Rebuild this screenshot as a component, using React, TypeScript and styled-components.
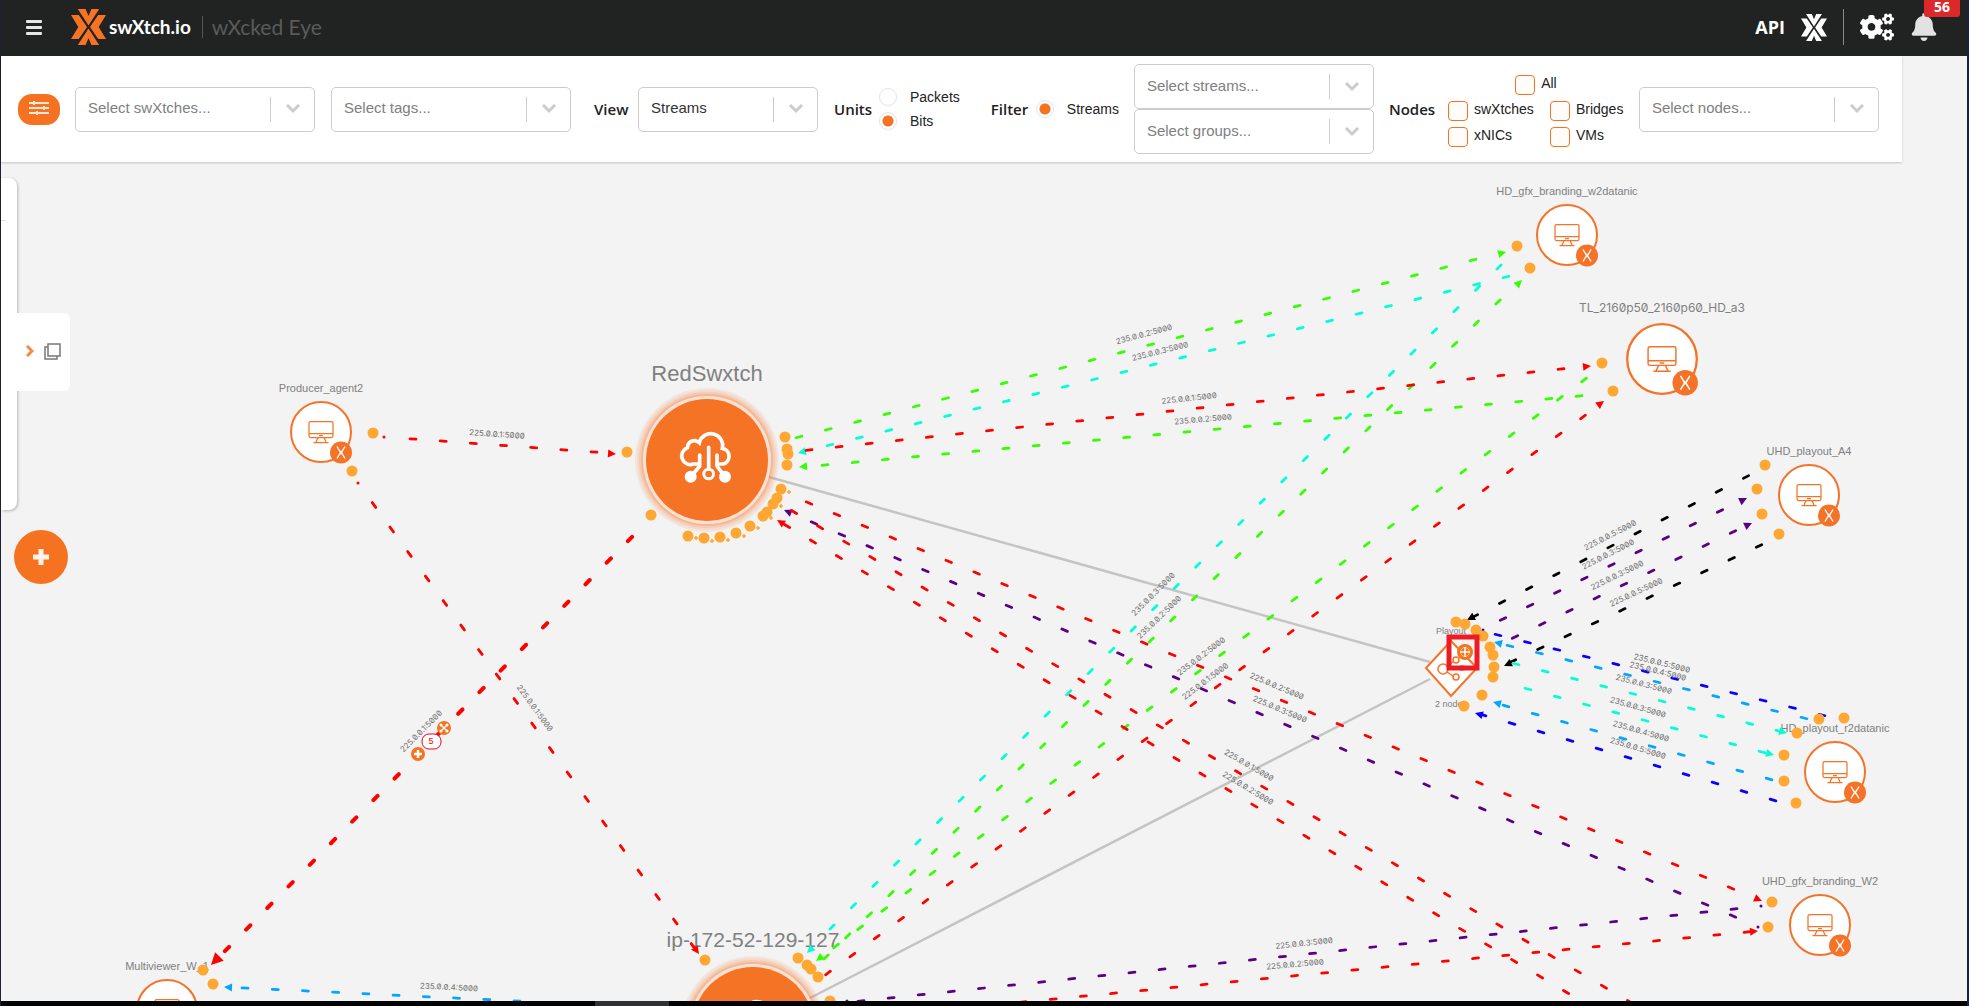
import React from 'react';
import styled, { createGlobalStyle } from 'styled-components';
import { FaBell, FaCogs } from 'react-icons/fa';

const ORANGE = '#f57320';
const AMBER = '#ffa733';
const RED = '#ff0000';
const GREEN = '#33ff00';
const CYAN = '#00ffd5';
const PURPLE = '#5b0080';
const BLACK = '#000000';
const BLUE = '#0a00ff';
const SKY = '#00a6ff';
const SANS = '"Liberation Sans", Arial, sans-serif';

const GlobalStyle = createGlobalStyle`
  * { box-sizing: border-box; }
  body { margin: 0; background: #f3f3f3; font-family: ${SANS}; }
  button, select, input { font-family: inherit; margin: 0; }
`;

const Page = styled.div`
  display: flex;
  flex-direction: column;
  height: 100vh;
  border-left: 1px solid #1d212c;
  border-right: 2px solid #16233f;
`;

/* ---------- header ---------- */

const Header = styled.header`
  display: flex;
  align-items: center;
  justify-content: space-between;
  height: 56px;
  flex: none;
  padding: 0 29px 0 25px;
  background: #212322;
  color: #fff;
`;

const HeaderSide = styled.div<{ $gap: number }>`
  display: flex;
  align-items: center;
  gap: ${(p) => p.$gap}px;
  padding-bottom: 2px;
`;

const MenuButton = styled.button`
  display: grid;
  gap: 3px;
  width: 16px;
  padding: 0;
  border: 0;
  background: none;
`;

const MenuBar = styled.span`
  height: 3px;
  border-radius: 1px;
  background: #e6e6e6;
`;

const Brand = styled.a`
  display: flex;
  align-items: center;
  height: 40px;
  margin-left: 29px;
  color: #fff;
  text-decoration: none;
`;

const BrandName = styled.span`
  margin-left: 3px;
  font: 700 19px/22px Lato, sans-serif;
  white-space: nowrap;
`;

const Product = styled.span`
  margin-left: 11px;
  padding-left: 9px;
  border-left: 1px solid #555;
  color: #5a5b5a;
  font: 400 21px/22px Lato, sans-serif;
  white-space: nowrap;
`;

const ApiLink = styled.a`
  color: #fff;
  font: 700 18px/20px "Open Sans", sans-serif;
  text-decoration: none;
`;

const HeaderRule = styled.span`
  width: 1px;
  height: 36px;
  background: #888;
`;

const IconButton = styled.button<{ $tint: string }>`
  position: relative;
  display: flex;
  padding: 0;
  border: 0;
  background: none;
  color: ${(p) => p.$tint};
`;

const Count = styled.span`
  position: absolute;
  left: 14px;
  bottom: 24px;
  width: 36px;
  height: 24px;
  padding-top: 6px;
  border-radius: 3px;
  background: #dc2828;
  color: #fff;
  font: 700 14px/16px "Open Sans", sans-serif;
  text-align: center;
`;

/* ---------- toolbar ---------- */

const Toolbar = styled.form`
  position: relative;
  display: flex;
  align-items: center;
  height: 106px;
  flex: none;
  margin-right: 65px;
  padding-left: 17px;
  background: #fff;
  box-shadow: 0 1px 2px rgba(0, 0, 0, 0.2);
`;

const Group = styled.div<{ $before?: number }>`
  display: flex;
  align-items: center;
  gap: 8px;
  margin-left: ${(p) => p.$before ?? 15}px;
`;

const FilterButton = styled.button`
  display: grid;
  place-items: center;
  width: 42px;
  height: 31px;
  padding: 0 0 2px;
  border: 0;
  border-radius: 14px;
  background: ${ORANGE};
`;

const Title = styled.span<{ $width: number }>`
  width: ${(p) => p.$width}px;
  color: #222;
  font: 600 15px/20px "Open Sans", sans-serif;
  white-space: nowrap;
`;

const SelectBox = styled.span<{ $width: number }>`
  display: grid;
  grid-template-columns: 1fr 45px;
  align-items: center;
  width: ${(p) => p.$width}px;
  height: 45px;
`;

const Select = styled.select<{ $muted: boolean }>`
  grid-area: 1 / 1 / 2 / 3;
  width: 100%;
  height: 100%;
  padding: 0 46px 3px 12px;
  border: 1px solid #ccc;
  border-radius: 5px;
  background: #fff;
  color: ${(p) => (p.$muted ? '#808080' : '#333')};
  font-size: 15px;
  appearance: none;
`;

const SelectMark = styled.span`
  grid-area: 1 / 2;
  z-index: 1;
  display: grid;
  place-items: center;
  height: 25px;
  border-left: 1px solid #ccc;
  pointer-events: none;
`;

const Stack = styled.div`
  display: flex;
  flex-direction: column;
`;

const RadioRow = styled.label`
  display: flex;
  align-items: center;
  gap: 13px;
  height: 24px;
  color: #222;
  font-size: 14px;
  line-height: 18px;
  white-space: nowrap;
`;

const Radio = styled.input`
  width: 18px;
  height: 18px;
  border: 1px solid #e4e4e4;
  border-radius: 50%;
  background: #fff;
  appearance: none;

  &:checked {
    background: radial-gradient(circle, ${ORANGE} 5px, #fff 6px);
  }
`;

const NodeGrid = styled.div`
  display: grid;
  grid-template-columns: 102px 74px;
  row-gap: 6px;
  margin-left: 6px;
  padding-top: 3px;
`;

const CheckRow = styled.label<{ $wide?: boolean }>`
  display: flex;
  gap: 6px;
  height: 20px;
  grid-column: ${(p) => (p.$wide ? '1 / 3' : 'auto')};
  justify-content: ${(p) => (p.$wide ? 'center' : 'flex-start')};
  color: #222;
  font-size: 14px;
  line-height: 16px;
`;

const Check = styled.input`
  width: 20px;
  height: 20px;
  border: 1px solid ${ORANGE};
  border-radius: 4px;
  background: #fffcfa;
  appearance: none;
`;

/* ---------- canvas ---------- */

const Canvas = styled.main`
  position: relative;
  flex: 1;
  min-height: 0;
  overflow: hidden;
`;

const Graph = styled.svg`
  display: block;
  width: 100%;
  height: 100%;
`;

const NodeName = styled.text<{ $size: number }>`
  fill: #808080;
  font-family: ${SANS};
  font-size: ${(p) => p.$size}px;
  text-anchor: middle;
`;

const SlashedName = styled(NodeName)`
  font-family: Inter, sans-serif;
  font-feature-settings: "zero";
`;

const EdgeName = styled.text`
  fill: #707070;
  font-family: Inter, sans-serif;
  font-size: 8px;
  font-feature-settings: "zero";
  text-anchor: middle;
`;

const EdgeCount = styled.text`
  fill: ${RED};
  font-family: ${SANS};
  font-size: 9px;
  text-anchor: middle;
`;

const Drawer = styled.aside`
  position: absolute;
  top: 16px;
  left: 0;
  display: flex;
  align-items: center;
`;

const DrawerPanel = styled.div`
  width: 16px;
  height: 332px;
  padding-top: 42px;
  border-radius: 0 8px 8px 0;
  background: #fff;
  box-shadow: 1px 1px 3px rgba(0, 0, 0, 0.25);
`;

const DrawerRule = styled.div`
  width: 4px;
  height: 1px;
  background: #ddd;
`;

const DrawerTab = styled.button`
  display: flex;
  align-items: center;
  gap: 10px;
  width: 53px;
  height: 78px;
  margin-top: 16px;
  padding: 0 0 2px 9px;
  border: 0;
  border-radius: 0 6px 6px 0;
  background: #fff;
`;

const AddButton = styled.button`
  position: absolute;
  top: 368px;
  left: 13px;
  display: grid;
  place-items: center;
  width: 54px;
  height: 54px;
  padding: 0;
  border: 0;
  border-radius: 50%;
  background: ${ORANGE};
`;

const ScrollTrack = styled.footer`
  display: flex;
  justify-content: center;
  flex: none;
  height: 5px;
  background: #010204;
`;

const ScrollThumb = styled.span`
  width: 74px;
  margin-right: 704px;
  background: #2f3134;
`;

/* ---------- small parts ---------- */

const XLogo = ({ width, height, fill }: { width: number; height: number; fill: string }) => (
  <svg width={width} height={height} viewBox="0 0 36 36" preserveAspectRatio="none" fill={fill} aria-hidden="true">
    <path d="M7 0h8l3 7 3-7h8L18 16.500z" />
    <path d="M7 36h8l3-7 3 7h8L18 19.500z" />
    <path d="M0 6h8l8.500 12L8 30H0l7.500-12z" />
    <path d="M36 6h-8l-8.500 12L28 30h8l-7.500-12z" />
  </svg>
);

type PickProps = { text: string; width?: number; muted?: boolean };

const Pick = ({ text, width = 240, muted = true }: PickProps) => (
  <SelectBox $width={width}>
    <Select aria-label={text} $muted={muted}>
      <option>{text}</option>
    </Select>
    <SelectMark>
      <svg width="16" height="10" viewBox="0 0 16 10" fill="none" stroke="#ccc" strokeWidth="3" aria-hidden="true">
        <path d="M2 1l6 6 6-6" />
      </svg>
    </SelectMark>
  </SelectBox>
);

const RadioOption = ({ text, name, on }: { text: string; name: string; on?: boolean }) => (
  <RadioRow>
    <Radio type="radio" name={name} defaultChecked={on} />
    {text}
  </RadioRow>
);

const CheckOption = ({ text, wide }: { text: string; wide?: boolean }) => (
  <CheckRow $wide={wide}>
    <Check type="checkbox" />
    {text}
  </CheckRow>
);

/* ---------- graph data ---------- */

type Point = [number, number];
type Edge = { color: string; from: Point; to: Point; tip?: Point; bold?: boolean };

/* from and to are the centres of the first and last dash of a stream. */
const edges: Edge[] = [
  { color: GREEN, from: [799, 437], to: [1473, 260], tip: [1506, 252] },
  { color: CYAN, from: [1506, 277], to: [830, 445], tip: [798, 453] },
  { color: CYAN, from: [1499, 267], to: [832, 927], tip: [807, 953] },
  { color: GREEN, from: [826, 957], to: [1498, 302], tip: [1522, 280] },
  { color: GREEN, from: [1584, 380], to: [836, 946], tip: [816, 961] },
  { color: RED, from: [828, 973], to: [1583, 417], tip: [1604, 401] },
  { color: RED, from: [809, 450], to: [1561, 369], tip: [1591, 366] },
  { color: GREEN, from: [1579, 396], to: [825, 465], tip: [799, 467] },
  { color: RED, from: [809, 503], to: [1731, 888], tip: [1762, 901] },
  { color: PURPLE, from: [1733, 916], to: [814, 523], tip: [784, 510] },
  { color: RED, from: [794, 512], to: [1630, 1002] },
  { color: RED, from: [1566, 992], to: [787, 526], tip: [777, 520] },
  { color: RED, from: [413, 439], to: [594, 452], tip: [616, 454] },
  { color: RED, from: [374, 505], to: [693, 946], tip: [699, 954] },
  { color: RED, from: [630, 539], to: [227, 949], tip: [211, 965], bold: true },
  { color: SKY, from: [517, 1001], to: [245, 988], tip: [224, 987] },
  { color: PURPLE, from: [1734, 909], to: [861, 1001] },
  { color: RED, from: [1023, 1002], to: [1747, 932], tip: [1758, 931] },
  { color: BLACK, from: [1746, 477], to: [1475, 616], tip: [1467, 620] },
  { color: PURPLE, from: [1503, 619], to: [1720, 511], tip: [1747, 498] },
  { color: PURPLE, from: [1515, 637], to: [1733, 532], tip: [1752, 523] },
  { color: BLACK, from: [1759, 546], to: [1513, 661], tip: [1504, 666] },
  { color: BLUE, from: [1498, 635], to: [1822, 715] },
  { color: SKY, from: [1804, 718], to: [1510, 646], tip: [1494, 642] },
  { color: CYAN, from: [1516, 664], to: [1779, 731], tip: [1787, 733] },
  { color: CYAN, from: [1528, 689], to: [1762, 752], tip: [1774, 755] },
  { color: SKY, from: [1769, 779], to: [1506, 706], tip: [1493, 702] },
  { color: BLUE, from: [1773, 800], to: [1483, 715], tip: [1475, 713] },
];

const stubs: { color: string; at: Point }[] = [
  { color: RED, at: [384, 437] },
  { color: RED, at: [358, 483] },
  { color: PURPLE, at: [1758, 927] },
  { color: PURPLE, at: [1761, 906] },
  { color: PURPLE, at: [847, 1001] },
  { color: BLUE, at: [1483, 630] },
];

const ports: Point[] = [
  [627, 452], [785, 437], [787, 449], [788, 454], [787, 465], [781, 489], [777, 498], [773, 504],
  [767, 512], [763, 516], [750, 526], [736, 533], [720, 537], [704, 538], [688, 536], [651, 515],
  [373, 433], [352, 471], [1517, 246], [1530, 268], [1602, 363], [1613, 391], [1765, 465],
  [1757, 489], [1762, 514], [1779, 534], [1456, 622], [1465, 624], [1476, 630], [1483, 636],
  [1490, 647], [1493, 655], [1494, 667], [1493, 677], [1482, 695], [1464, 706], [1819, 719],
  [1844, 718], [1797, 733], [1784, 755], [1784, 781], [1796, 803], [1772, 902], [1768, 927],
  [203, 970], [213, 984], [705, 960], [798, 958], [807, 965], [811, 969], [818, 977], [830, 1001],
];

const sparks: Point[] = [
  [789, 492], [781, 506], [771, 518], [758, 528], [744, 536], [728, 540], [712, 541], [696, 538],
];

const edgeNames: [string, number, number, number][] = [
  ['235.0.0.2:5000', 1144, 334, -15],
  ['235.0.0.3:5000', 1160, 351, -14],
  ['225.0.0.1:5000', 1189, 398, -6],
  ['235.0.0.2:5000', 1203, 419, -5],
  ['225.0.0.1:5000', 497, 434, 4],
  ['225.0.0.1:5000', 535, 708, 54],
  ['225.0.0.1:5000', 421, 731, -45],
  ['235.0.0.4:5000', 449, 987, 3],
  ['235.0.0.3:5000', 1153, 594, -45],
  ['235.0.0.2:5000', 1159, 617, -44],
  ['235.0.0.2:5000', 1201, 656, -37],
  ['225.0.0.1:5000', 1205, 681, -37],
  ['225.0.0.2:5000', 1277, 686, 23],
  ['225.0.0.3:5000', 1280, 709, 23],
  ['225.0.0.1:5000', 1249, 765, 30],
  ['225.0.0.2:5000', 1248, 788, 31],
  ['225.0.0.5:5000', 1610, 535, -27],
  ['225.0.0.3:5000', 1608, 554, -27],
  ['225.0.0.3:5000', 1617, 575, -26],
  ['225.0.0.5:5000', 1636, 592, -25],
  ['235.0.0.5:5000', 1662, 663, 14],
  ['235.0.0.4:5000', 1658, 671, 14],
  ['235.0.0.3:5000', 1644, 684, 15],
  ['235.0.0.3:5000', 1638, 707, 16],
  ['235.0.0.4:5000', 1641, 731, 16],
  ['235.0.0.5:5000', 1638, 748, 17],
  ['225.0.0.3:5000', 1304, 943, -6],
  ['225.0.0.2:5000', 1295, 964, -5],
];

type HostProps = { name: string; x: number; y: number; big?: boolean };

const hosts: HostProps[] = [
  { name: 'HD_gfx_branding_w2datanic', x: 1567, y: 235 },
  { name: 'TL_2160p50_2160p60_HD_a3', x: 1662, y: 359, big: true },
  { name: 'UHD_playout_A4', x: 1809, y: 495 },
  { name: 'HD_playout_r2datanic', x: 1835, y: 772 },
  { name: 'UHD_gfx_branding_W2', x: 1820, y: 925 },
  { name: 'Producer_agent2', x: 321, y: 432 },
  { name: 'Multiviewer_W_1', x: 167, y: 1010 },
];

const PERIOD = 30;
const DASH = 6;

const Arrow = ({ tip, angle, size, color }: { tip: Point; angle: number; size: number; color: string }) => (
  <path
    transform={`translate(${tip[0]} ${tip[1]}) rotate(${angle})`}
    d={`M0 0L${-size} ${-size / 2}V${size / 2}z`}
    fill={color}
  />
);

const Stream = ({ color, from, to, tip, bold }: Edge) => {
  const dx = to[0] - from[0];
  const dy = to[1] - from[1];
  const length = Math.hypot(dx, dy);
  const step = length / Math.round(length / (PERIOD + 0.25));
  const ux = (dx / length) * (DASH / 2);
  const uy = (dy / length) * (DASH / 2);
  return (
    <g>
      <line
        x1={from[0] - ux}
        y1={from[1] - uy}
        x2={to[0] + ux}
        y2={to[1] + uy}
        stroke={color}
        strokeWidth={bold ? 4 : 2.75}
        strokeLinecap="round"
        strokeDasharray={`${DASH} ${step - DASH}`}
      />
      {tip && <Arrow tip={tip} angle={(Math.atan2(dy, dx) * 180) / Math.PI} size={bold ? 12 : 8} color={color} />}
    </g>
  );
};

const Host = ({ x, y, big }: HostProps) => (
  <g transform={`translate(${x} ${y}) scale(${big ? 1.16 : 1})`}>
    <circle r="30" fill="#fff" stroke="#f57329" strokeWidth="2" />
    <g fill="none" stroke="#f57329" strokeWidth="1.250">
      <rect x="-12" y="-10.500" width="24" height="16" rx="1.500" />
      <path d="M-12 1.500h24M-2 3.500h4M-3 5.500l-2 4.500M3 5.500l2 4.500M-7.500 10.500h15" />
    </g>
    <circle cx="20" cy="20.500" r="11" fill="#f57329" />
    <g transform="translate(20 20.500)" fill="none" stroke="#fff" strokeWidth="1.300">
      <path d="M-4 -6L-.5 0L-4 6M4 -6L.5 0L4 6" />
      <path d="M-1.500 -2.500L0 0L1.500 -2.500M-1.500 2.500L0 0L1.500 2.500" strokeWidth=".8" />
    </g>
  </g>
);

const HostName = ({ name, x, y, big }: HostProps) => {
  const Label = big ? SlashedName : NodeName;
  return (
    <Label $size={big ? 12 : 11} x={x} y={y - (big ? 47 : 40)}>
      {name}
    </Label>
  );
};

const Switch = ({ x, y }: { x: number; y: number }) => (
  <g transform={`translate(${x} ${y})`}>
    <circle r="72" fill="#f57325" opacity=".1" />
    <circle r="70" fill="#f57325" opacity=".1" />
    <circle r="68" fill="#f57325" opacity=".14" />
    <circle r="66" fill="#f57325" opacity=".2" />
    <circle r="64" fill="#fee1d2" />
    <circle r="61" fill="#f57325" />
    <g transform="scale(.3333) translate(-381 -361)" fill="none" stroke="#fff" strokeWidth="11" strokeLinecap="round">
      <path d="M357 373H341A26 26 0 0 1 322 324Q325 302 346 303Q354 305 358 309A35 35 0 0 1 427 326A24 24 0 0 1 429 373H412" />
      <path d="M359 346V379L334 410M386 323V388M411 346V379L434 410" />
      <circle cx="386" cy="403" r="14.500" strokeWidth="9" />
      <circle cx="332" cy="411" r="18" fill="#fff" stroke="none" />
      <circle cx="435" cy="411" r="18" fill="#fff" stroke="none" />
    </g>
  </g>
);

const Playout = () => (
  <g>
    <path d="M1451 641l26 27-26 28-25-28z" fill="#fff" stroke="#f57329" strokeWidth="2" />
    <g fill="none" stroke="#f57329" strokeWidth="1.500">
      <circle cx="1443" cy="669" r="5" />
      <circle cx="1456" cy="660" r="3" />
      <circle cx="1456" cy="677" r="3" />
      <ellipse cx="1462" cy="668" rx="3" ry="2" fill="#f57329" />
      <path d="M1447 666l6-4M1447 672l6 4" />
    </g>
  </g>
);

const PlayoutMarker = () => (
  <g>
    <circle cx="1465" cy="652" r="8" fill={ORANGE} />
    <circle cx="1465" cy="652" r="4.500" fill="none" stroke="#ffd27a" />
    <path d="M1460 652h10M1465 647v10" stroke="#fff" strokeWidth="1.500" />
    <rect x="1449" y="637" width="28" height="31" fill="none" stroke="#ed1c24" strokeWidth="5" />
  </g>
);

const EdgeControls = () => (
  <g>
    <circle cx="444" cy="728" r="7" fill={ORANGE} />
    <path d="M441 725l6 6M447 725l-6 6" stroke="#fff" strokeWidth="1.250" />
    <g fill="#fff">
      <circle cx="441" cy="725" r="1.500" />
      <circle cx="447" cy="725" r="1.500" />
      <circle cx="441" cy="731" r="1.500" />
      <circle cx="447" cy="731" r="1.500" />
    </g>
    <circle cx="418" cy="754" r="7" fill={ORANGE} />
    <path d="M414 754h8M418 750v8" stroke="#fff" strokeWidth="2.500" />
    <rect x="422" y="734" width="19" height="15" rx="7" fill="#fff" stroke="#f00014" />
    <EdgeCount x={431} y={744}>5</EdgeCount>
  </g>
);

const Topology = () => (
  <Graph role="img" aria-label="Stream topology">
    <g transform="translate(-1 -162)">
      <path d="M769 477L1430 662M810 998L1430 679" stroke="#c4c4c4" strokeWidth="2.500" />
      <Playout />
      <NodeName $size={9} x={1451} y={634}>Playout</NodeName>
      <NodeName $size={9} x={1451} y={707}>2 nodes</NodeName>
      {hosts.map((h) => <Host key={h.name} {...h} />)}
      {hosts.map((h) => <HostName key={h.name} {...h} />)}
      <Switch x={707} y={460} />
      <Switch x={753} y={1028} />
      <NodeName $size={22} x={707} y={381}>RedSwxtch</NodeName>
      <NodeName $size={21} x={753} y={947}>ip-172-52-129-127</NodeName>
      {edges.map((e, i) => <Stream key={i} {...e} />)}
      {stubs.map((s, i) => <circle key={i} cx={s.at[0]} cy={s.at[1]} r="1.500" fill={s.color} />)}
      {ports.map(([x, y], i) => <circle key={i} cx={x} cy={y} r="5.500" fill={AMBER} />)}
      {sparks.map(([x, y], i) => <path key={i} d={`M${x - 2} ${y}h4M${x} ${y - 2}v4`} stroke={AMBER} strokeWidth="1.500" />)}
      {edgeNames.map(([text, x, y, turn], i) => (
        <EdgeName key={i} transform={`translate(${x} ${y}) rotate(${turn})`} dy="3">{text}</EdgeName>
      ))}
      <PlayoutMarker />
      <EdgeControls />
    </g>
  </Graph>
);

export default function App() {
  return (
    <>
      <GlobalStyle />
      <Page>
        <Header>
          <HeaderSide $gap={0}>
            <MenuButton type="button" aria-label="Menu">
              <MenuBar />
              <MenuBar />
              <MenuBar />
            </MenuButton>
            <Brand href="#home">
              <XLogo width={35} height={36} fill="#f57325" />
              <BrandName>swXtch.io</BrandName>
              <Product>wXcked Eye</Product>
            </Brand>
          </HeaderSide>
          <HeaderSide $gap={16}>
            <ApiLink href="#api">API</ApiLink>
            <XLogo width={26} height={27} fill="#fff" />
            <HeaderRule />
            <IconButton type="button" aria-label="Settings" $tint="#fff">
              <FaCogs size={34} />
            </IconButton>
            <IconButton type="button" aria-label="Notifications" $tint="#e2e2e2">
              <FaBell size={28} />
              <Count>56</Count>
            </IconButton>
          </HeaderSide>
        </Header>

        <Toolbar>
          <FilterButton type="button" aria-label="Filters">
            <svg width="20" height="16" viewBox="0 0 20 16" stroke="#ffe6d6" strokeWidth="2" aria-hidden="true">
              <path d="M0 3h20M0 8h20M0 13h20M5 1v4M15 6v4M8 11v4" />
            </svg>
          </FilterButton>
          <Group>
            <Pick text="Select swXtches..." />
          </Group>
          <Group $before={16}>
            <Pick text="Select tags..." />
          </Group>
          <Group $before={23}>
            <Title $width={36}>View</Title>
            <Pick text="Streams" width={180} muted={false} />
          </Group>
          <Group $before={16}>
            <Title $width={37}>Units</Title>
            <Stack>
              <RadioOption name="units" text="Packets" />
              <RadioOption name="units" text="Bits" on />
            </Stack>
          </Group>
          <Group $before={31}>
            <Title $width={37}>Filter</Title>
            <RadioOption name="filter" text="Streams" on />
          </Group>
          <Group>
            <Stack>
              <Pick text="Select streams..." />
              <Pick text="Select groups..." />
            </Stack>
          </Group>
          <Group>
            <Title $width={45}>Nodes</Title>
            <NodeGrid>
              <CheckOption text="All" wide />
              <CheckOption text="swXtches" />
              <CheckOption text="Bridges" />
              <CheckOption text="xNICs" />
              <CheckOption text="VMs" />
            </NodeGrid>
          </Group>
          <Group>
            <Pick text="Select nodes..." />
          </Group>
        </Toolbar>

        <Canvas>
          <Topology />
          <Drawer>
            <DrawerPanel>
              <DrawerRule />
            </DrawerPanel>
            <DrawerTab type="button" aria-label="Open panel">
              <svg width="8" height="12" viewBox="0 0 8 12" fill="none" stroke="#f58a45" strokeWidth="3" aria-hidden="true">
                <path d="M1 1l5 5-5 5" />
              </svg>
              <svg width="17" height="17" viewBox="0 0 17 17" fill="none" stroke="#777" strokeWidth="1.500" aria-hidden="true">
                <path d="M4 1h12v12H4zM4 4H1v12h12v-3" />
              </svg>
            </DrawerTab>
          </Drawer>
          <AddButton type="button" aria-label="Add">
            <svg width="16" height="16" viewBox="0 0 16 16" stroke="#fff3ea" strokeWidth="5" aria-hidden="true">
              <path d="M0 8h16M8 0v16" />
            </svg>
          </AddButton>
        </Canvas>
        <ScrollTrack>
          <ScrollThumb />
        </ScrollTrack>
      </Page>
    </>
  );
}
